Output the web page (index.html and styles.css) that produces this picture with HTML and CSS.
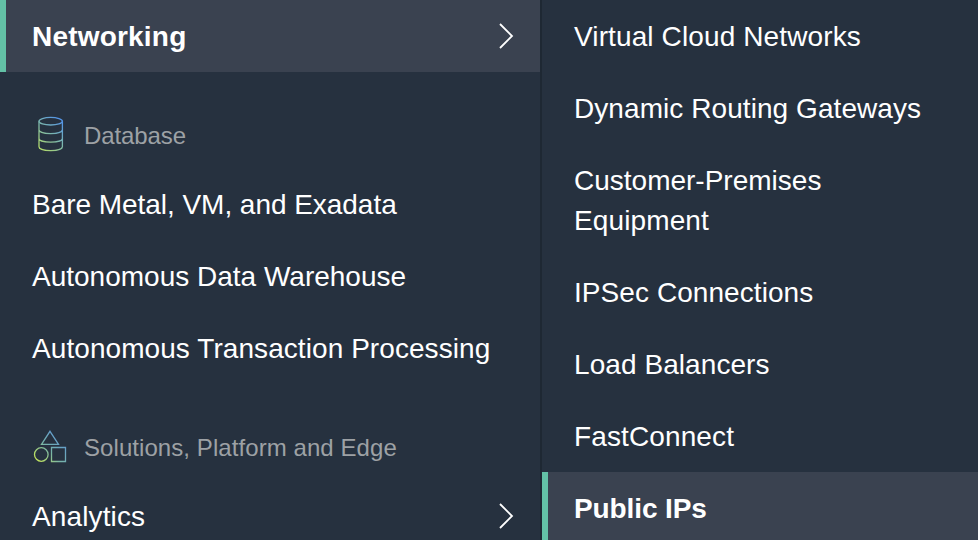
FILE: index.html
```html
<!DOCTYPE html>
<html lang="en">
<head>
<meta charset="utf-8">
<title>Navigation</title>
<link rel="stylesheet" href="styles.css">
</head>
<body>
<div class="nav">
  <nav class="panel primary">
    <a class="item active"><span class="wide">Networking</span><svg class="chevron" viewBox="0 0 16 26"><path d="M2 1 14 13 2 25"/></svg></a>
    <h2 class="heading">
      <svg class="icon" viewBox="0 0 36 36"><defs><linearGradient id="g" gradientUnits="userSpaceOnUse" x1="6" y1="32" x2="30" y2="6"><stop offset="0" stop-color="#b5dc68"/><stop offset=".5" stop-color="#7fb9a8"/><stop offset="1" stop-color="#5595e6"/></linearGradient><linearGradient id="s" gradientUnits="userSpaceOnUse" x1="4" y1="31" x2="27" y2="9"><stop offset="0" stop-color="#c0e35c"/><stop offset=".5" stop-color="#77b3a9"/><stop offset="1" stop-color="#619bd0"/></linearGradient></defs><g stroke="url(#g)"><ellipse cx="18.700" cy="5.200" rx="11.700" ry="3.800"/><path d="M7 5.200V30.800c0 5 23.400 5 23.400 0V5.200M7 13.800c0 5 23.400 5 23.400 0M7 22.400c0 5 23.400 5 23.400 0"/></g></svg>
      <span class="tight">Database</span></h2>
    <a class="item"><span class="snug">Bare Metal, VM, and Exadata</span></a>
    <a class="item">Autonomous Data Warehouse</a>
    <a class="item"><span class="loose">Autonomous Transaction Processing</span></a>
    <h2 class="heading">
      <svg class="icon" viewBox="0 0 36 36"><g stroke="url(#s)"><path d="m18 3.300 8.500 13h-17zM19.500 19.500h14v14h-14z"/><circle cx="9.300" cy="26.500" r="6.800"/></g></svg>
      <span class="loose">Solutions, Platform and Edge</span></h2>
    <a class="item"><span class="roomy">Analytics</span><svg class="chevron" viewBox="0 0 16 26"><path d="M2 1 14 13 2 25"/></svg></a>
  </nav>
  <nav class="panel secondary">
    <a class="item"><span class="roomy">Virtual Cloud Networks</span></a>
    <a class="item"><span class="loose">Dynamic Routing Gateways</span></a>
    <a class="item"><span>Customer-Premises<br><span class="roomy">Equipment</span></span></a>
    <a class="item"><span class="loose">IPSec Connections</span></a>
    <a class="item"><span class="loose">Load Balancers</span></a>
    <a class="item"><span class="roomy">FastConnect</span></a>
    <a class="item active"><span class="tight">Public IPs</span></a>
  </nav>
</div>
</body>
</html>
```
FILE: styles.css
```css
* { box-sizing: border-box; }
body { margin: 0; background: #26313f; color: #fff; font: 28px/40px "Liberation Sans", Arial, sans-serif; overflow: hidden; }
.nav { display: grid; grid-template-columns: 542px 1fr; height: 540px; overflow: hidden; }
.panel { min-width: 0; }
.primary { border-right: 2px solid #1e2833; }
.item { display: flex; justify-content: space-between; align-items: center; min-height: 72px; padding: 17px 26px 15px 32px; white-space: nowrap; }
.active { background: #3a4250; border-left: 6px solid #63c1a6; padding-left: 26px; font-weight: 700; }
.chevron { width: 16px; height: 26px; margin-bottom: 2px; fill: none; stroke: #fff; stroke-width: 1.8; }
.heading { display: flex; align-items: center; gap: 16px; height: 64px; margin: 32px 0 0; padding: 0 32px; font-size: 24px; font-weight: 400; color: #9da1a5; white-space: nowrap; }
.icon { width: 36px; height: 36px; margin-bottom: 4px; fill: none; stroke-width: 1.3; }
.wide { letter-spacing: .2px; }
.roomy { letter-spacing: .12px; }
.loose { letter-spacing: .07px; }
.snug { letter-spacing: -.04px; }
.tight { letter-spacing: -.1px; }
```
